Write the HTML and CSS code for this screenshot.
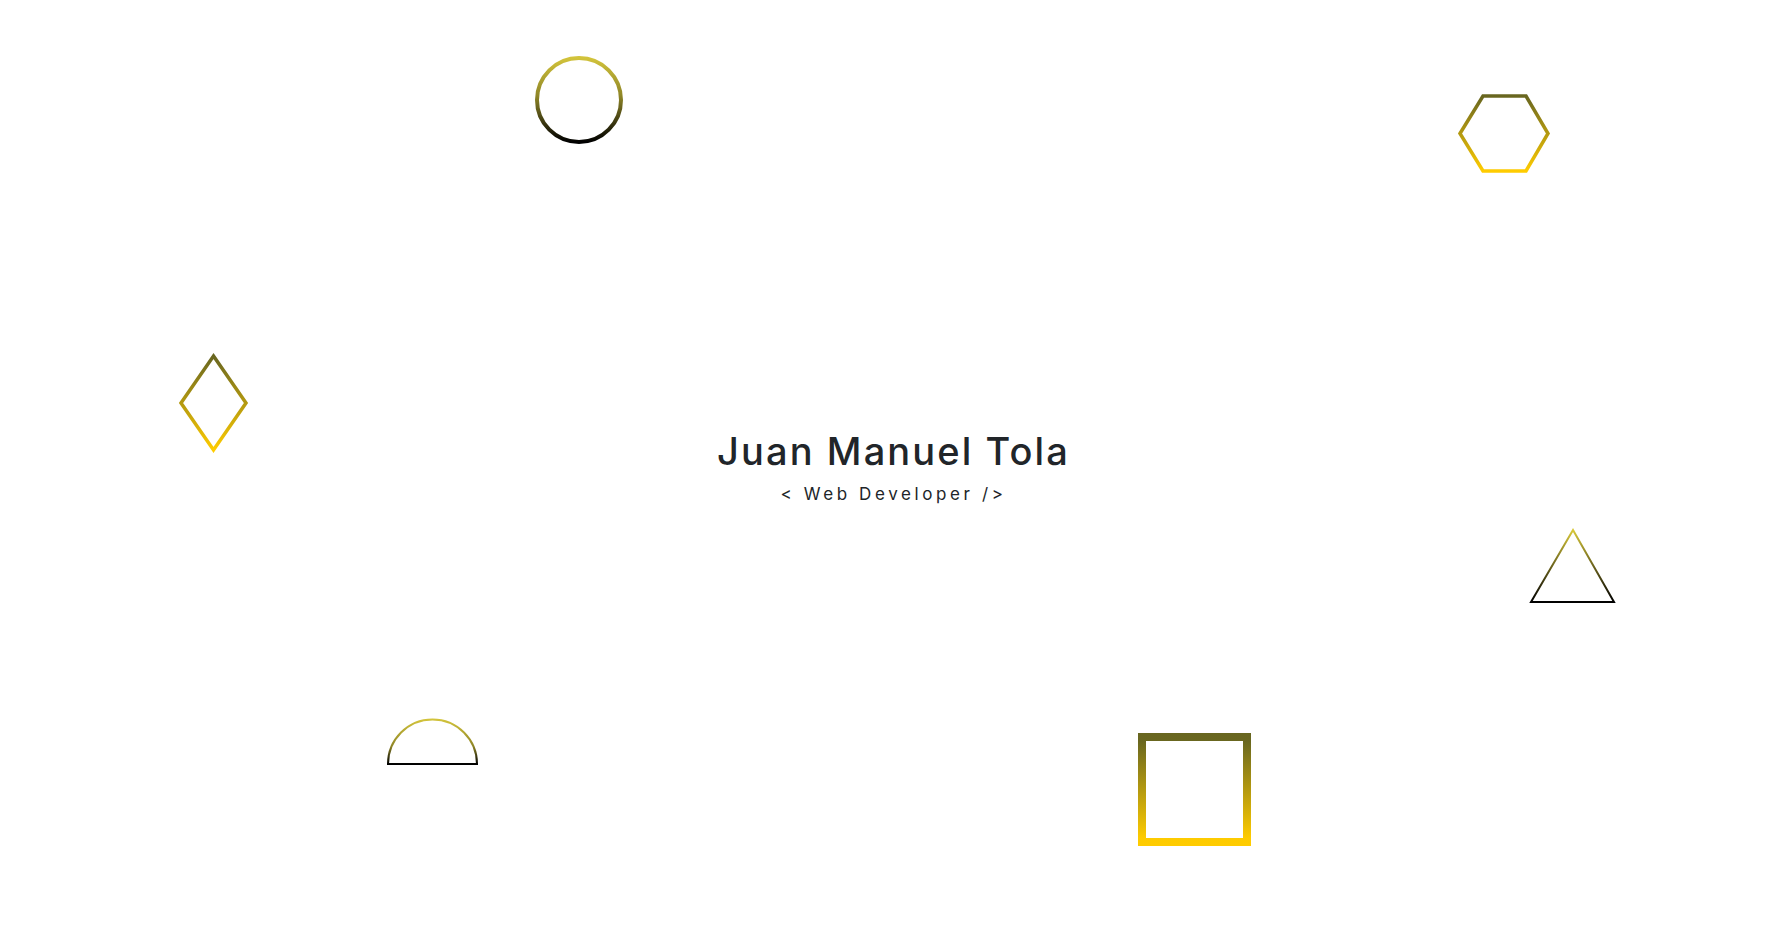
FILE: index.html
```html
<!DOCTYPE html>
<html lang="en">
<head>
<meta charset="utf-8">
<title>Juan Manuel Tola</title>
<link rel="stylesheet" href="styles.css">
</head>
<body>
<main class="hero">
  <svg class="shape circle" width="88" height="88" viewBox="0 0 88 88">
    <defs><linearGradient id="gYB" x1="0" y1="0" x2="0" y2="1"><stop offset="0" stop-color="#d2c33b"/><stop offset="0.45" stop-color="#8f8627"/><stop offset="1" stop-color="#000"/></linearGradient></defs>
    <circle cx="44" cy="44" r="42" fill="none" stroke="url(#gYB)" stroke-width="4"/>
  </svg>
  <svg class="shape hexagon" width="100" height="84" viewBox="0 0 100 84">
    <defs><linearGradient id="gOG" x1="0" y1="0" x2="0" y2="1"><stop offset="0" stop-color="#686620"/><stop offset="1" stop-color="#ffcc00"/></linearGradient></defs>
    <polygon points="5,40.5 28,3 71,3 93,40.5 71,78 28,78" fill="none" stroke="url(#gOG)" stroke-width="3.5"/>
  </svg>
  <svg class="shape diamond" width="76" height="106" viewBox="0 0 76 106">
    <defs><linearGradient id="gOG2" x1="0" y1="0" x2="0" y2="1"><stop offset="0" stop-color="#686620"/><stop offset="1" stop-color="#ffcc00"/></linearGradient></defs>
    <polygon points="38.5,6 71,53 38.5,100 6,53" fill="none" stroke="url(#gOG2)" stroke-width="3.5"/>
  </svg>
  <svg class="shape triangle" width="95" height="82" viewBox="0 0 95 82">
    <defs><linearGradient id="gYB2" x1="0" y1="0" x2="0" y2="1"><stop offset="0" stop-color="#d8c83a"/><stop offset="1" stop-color="#000"/></linearGradient></defs>
    <polygon points="48,5 89,77 6,77" fill="none" stroke="url(#gYB2)" stroke-width="2"/>
  </svg>
  <svg class="shape semicircle" width="100" height="52" viewBox="0 0 100 52">
    <defs><linearGradient id="gYB3" x1="0" y1="0" x2="0" y2="1"><stop offset="0" stop-color="#d2c33b"/><stop offset="0.6" stop-color="#8f8627"/><stop offset="1" stop-color="#000"/></linearGradient></defs>
    <path d="M4,47 A44.5,44.5 0 0 1 93,47 Z" fill="none" stroke="url(#gYB3)" stroke-width="2"/>
  </svg>
  <div class="shape square"></div>

  <div class="intro">
    <h1 class="name">Juan Manuel Tola</h1>
    <p class="role">&lt; Web Developer /&gt;</p>
  </div>
</main>
</body>
</html>
```

FILE: styles.css
```css
html, body {
  margin: 0;
  padding: 0;
  background: #ffffff;
}

.hero {
  position: relative;
  width: 100%;
  height: 932px;
  display: flex;
  align-items: center;
  justify-content: center;
  overflow: hidden;
  font-family: "Inter", "Liberation Sans", sans-serif;
  color: #212529;
}

.shape {
  position: absolute;
  display: block;
}

.circle { left: 535px; top: 56px; }
.hexagon { left: 1455px; top: 93px; }
.diamond { left: 175px; top: 350px; }
.triangle { left: 1525px; top: 525px; }
.semicircle { left: 384px; top: 717px; }

.square {
  left: 1138px;
  top: 733px;
  width: 113px;
  height: 113px;
  box-sizing: border-box;
  border: 8px solid;
  border-image: linear-gradient(to bottom, #686620, #ffcc00) 1;
}

.intro {
  display: flex;
  flex-direction: column;
  align-items: center;
  transform: translateX(5px);
}

.name {
  margin: 0;
  font-size: 38px;
  font-weight: 500;
  line-height: 46px;
  letter-spacing: 2.1px;
}

.role {
  margin: 9px 0 0;
  font-size: 17px;
  font-weight: 400;
  line-height: 22px;
  letter-spacing: 3.6px;
}
```
